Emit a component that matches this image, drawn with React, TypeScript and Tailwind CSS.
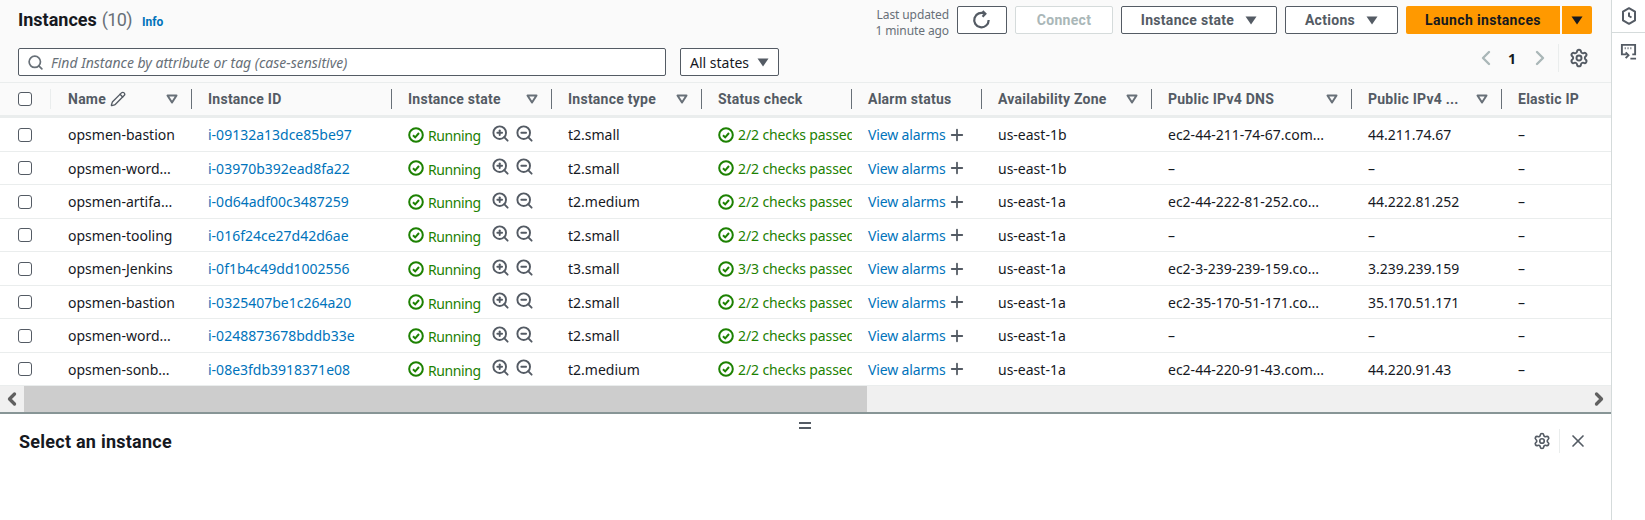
import { ChevronLeft, ChevronRight, Pencil, Plus, Search, Settings, X, ZoomIn, ZoomOut } from "lucide-react"

const font = "font-['Noto_Sans',sans-serif]"

const rows = [
    ["opsmen-bastion", "i-09132a13dce85be97", "t2.small", "2/2 checks passed", "us-east-1b", "ec2-44-211-74-67.com...", "44.211.74.67"],
    ["opsmen-word...", "i-03970b392ead8fa22", "t2.small", "2/2 checks passed", "us-east-1b", "–", "–"],
    ["opsmen-artifa...", "i-0d64adf00c3487259", "t2.medium", "2/2 checks passed", "us-east-1a", "ec2-44-222-81-252.co...", "44.222.81.252"],
    ["opsmen-tooling", "i-016f24ce27d42d6ae", "t2.small", "2/2 checks passed", "us-east-1a", "–", "–"],
    ["opsmen-Jenkins", "i-0f1b4c49dd1002556", "t3.small", "3/3 checks passed", "us-east-1a", "ec2-3-239-239-159.co...", "3.239.239.159"],
    ["opsmen-bastion", "i-0325407be1c264a20", "t2.small", "2/2 checks passed", "us-east-1a", "ec2-35-170-51-171.co...", "35.170.51.171"],
    ["opsmen-word...", "i-0248873678bddb33e", "t2.small", "2/2 checks passed", "us-east-1a", "–", "–"],
    ["opsmen-sonb...", "i-08e3fdb3918371e08", "t2.medium", "2/2 checks passed", "us-east-1a", "ec2-44-220-91-43.com...", "44.220.91.43"],
]

const headers = [
    { label: "Name", width: "w-[141px]", sort: true, pencil: true },
    { label: "Instance ID", width: "w-[200px]", sort: false },
    { label: "Instance state", width: "w-[160px]", sort: true },
    { label: "Instance type", width: "w-[150px]", sort: true },
    { label: "Status check", width: "w-[150px]", sort: false },
    { label: "Alarm status", width: "w-[130px]", sort: false },
    { label: "Availability Zone", width: "w-[170px]", sort: true },
    { label: "Public IPv4 DNS", width: "w-[200px]", sort: true },
    { label: "Public IPv4 ...", width: "w-[150px]", sort: true },
    { label: "Elastic IP", width: "w-[110px]", sort: false, last: true },
]

function Checkbox() {
    return <div className="w-[14px] h-[14px] rounded-[3px] border border-[#545b64] bg-white shrink-0" />
}

function SortIcon() {
    return (
        <svg width="12" height="10" viewBox="0 0 12 10" className="shrink-0">
            <path d="M1.5 1.5h9L6 8.5z" fill="none" stroke="#687078" strokeWidth="2" strokeLinejoin="round" />
        </svg>
    )
}

function Caret({ color = "#545b64" }: { color?: string }) {
    return (
        <svg width="12" height="9" viewBox="0 0 12 9" className="shrink-0">
            <path d="M0.5 0.5h11L6 8.5z" fill={color} />
        </svg>
    )
}

function CheckCircle() {
    return (
        <svg width="16" height="16" viewBox="0 0 16 16" className="shrink-0">
            <circle cx="8" cy="8" r="6.8" fill="none" stroke="#1d8102" strokeWidth="2" />
            <path d="M5 8.2l2.2 2.2L11 6" fill="none" stroke="#1d8102" strokeWidth="2" />
        </svg>
    )
}

function Row({ row }: { row: string[] }) {
    return (
        <div className="flex items-center h-[33.5px] pt-[1px] border-b border-[#eaeded] text-[14px] text-[#16191f] last:border-b-0">
            <div className="w-[51px] pl-[18px] shrink-0"><Checkbox /></div>
            <div className="w-[141px] pl-[17px] shrink-0 whitespace-nowrap">{row[0]}</div>
            <div className="w-[200px] pl-[16px] shrink-0 text-[#0073bb] whitespace-nowrap">{row[1]}</div>
            <div className="w-[160px] pl-[16px] shrink-0 flex items-center text-[#1d8102]">
                <CheckCircle />
                <span className="ml-[4px] mt-[2px] tracking-[-0.4px]">Running</span>
                <ZoomIn size={19} strokeWidth={2.4} color="#545b64" className="ml-[10px] -mt-[3px]" />
                <ZoomOut size={19} strokeWidth={2.4} color="#545b64" className="ml-[5px] -mt-[3px]" />
            </div>
            <div className="w-[150px] pl-[16px] shrink-0">{row[2]}</div>
            <div className="w-[150px] pl-[16px] shrink-0 flex items-center overflow-hidden whitespace-nowrap text-[#1d8102]">
                <CheckCircle />
                <span className="ml-[4px] tracking-[-0.12px]">{row[3]}</span>
            </div>
            <div className="w-[130px] pl-[16px] shrink-0 flex items-center text-[#0073bb] whitespace-nowrap tracking-[-0.15px]">
                View alarms
                <Plus size={18} strokeWidth={2.4} color="#545b64" className="ml-[2px]" />
            </div>
            <div className="w-[170px] pl-[16px] shrink-0">{row[4]}</div>
            <div className="w-[200px] pl-[16px] shrink-0 whitespace-nowrap">{row[5]}</div>
            <div className="w-[150px] pl-[16px] shrink-0">{row[6]}</div>
            <div className="w-[110px] pl-[16px] shrink-0">–</div>
        </div>
    )
}

function App() {
    return (
        <div className={`flex w-full h-[520px] overflow-hidden bg-white ${font}`}>
            <div className="w-[1611px] shrink-0 flex flex-col">
                <div className="h-[83px] bg-[#fafafa] border-b border-[#eaeded] px-[18px] flex flex-col">
                    <div className="flex items-start justify-between h-[48px]">
                        <div className="flex items-baseline mt-[6px] font-['Roboto',sans-serif]">
                            <span className="text-[18px] font-bold text-[#16191f]">Instances</span>
                            <span className="text-[18px] text-[#687078] ml-[5px] tracking-[-0.6px]">(10)</span>
                            <span className="text-[12px] font-bold text-[#0073bb] ml-[10px]">Info</span>
                        </div>
                        <div className="flex items-start gap-[8px] pt-[6px] mr-[1px]">
                            <div className="text-[12px] leading-[16px] text-[#687078] text-right pt-[1px] whitespace-nowrap tracking-[-0.1px]">
                                Last updated<br />1 minute ago
                            </div>
                            <button className="w-[50px] h-[28px] border border-[#545b64] rounded-[2px] bg-white flex items-center justify-center">
                                <svg width="20" height="20" viewBox="0 0 18 18" fill="none" stroke="#545b64" strokeWidth="2">
                                    <path d="M11.5 3.3A6.5 6.5 0 1 0 15 9" />
                                    <path d="M9.5 1l2.5 2.4-2.5 2.6" />
                                </svg>
                            </button>
                            <button className="w-[98px] h-[28px] border border-[#d5dbdb] rounded-[2px] bg-white text-[14px] font-bold text-[#aab7b8] font-['Roboto',sans-serif] tracking-[0.3px]">Connect</button>
                            <button className="w-[156px] h-[28px] border border-[#545b64] rounded-[2px] bg-white text-[14px] font-bold text-[#545b64] flex items-center justify-center gap-[11px] font-['Roboto',sans-serif] tracking-[0.3px]">Instance state <Caret /></button>
                            <button className="w-[113px] h-[28px] border border-[#545b64] rounded-[2px] bg-white text-[14px] font-bold text-[#545b64] flex items-center justify-center gap-[11px] font-['Roboto',sans-serif] tracking-[0.3px]">Actions <Caret /></button>
                            <div className="flex gap-[2px]">
                                <button className="w-[154px] h-[28px] bg-[#ff9900] rounded-l-[2px] text-[14px] font-bold text-[#16191f] font-['Roboto',sans-serif] tracking-[0.35px]">Launch instances</button>
                                <button className="w-[30px] h-[28px] bg-[#ff9900] rounded-r-[2px] flex items-center justify-center"><Caret color="#16191f" /></button>
                            </div>
                        </div>
                    </div>
                    <div className="flex items-start h-[28px]">
                        <div className="w-[648px] h-[28px] border border-[#545b64] rounded-[2px] bg-white flex items-center pl-[8px]">
                            <Search size={17} strokeWidth={2.4} color="#687078" />
                            <span className="ml-[7px] text-[14px] italic text-[#687078]">Find Instance by attribute or tag (case-sensitive)</span>
                        </div>
                        <div className="ml-[14px] w-[99px] h-[28px] border border-[#545b64] rounded-[2px] bg-white flex items-center justify-between px-[9px] text-[14px] text-[#16191f]">
                            All states <Caret />
                        </div>
                        <div className="ml-auto flex items-center h-[28px] -mt-[4px] mr-[4px]">
                            <ChevronLeft size={24} strokeWidth={2.4} color="#aab7b8" />
                            <span className="ml-[5px] w-[18px] text-center text-[14px] font-bold text-[#16191f]">1</span>
                            <ChevronRight size={24} strokeWidth={2.4} color="#aab7b8" className="ml-[7px]" />
                            <div className="w-px h-[28px] bg-[#eaeded] ml-[6px]" />
                            <Settings size={20} strokeWidth={2.3} color="#545b64" className="ml-[10px]" />
                        </div>
                    </div>
                </div>
                <div className="h-[32px] bg-[#fafafa] flex items-center text-[14px] font-bold text-[#545b64] whitespace-nowrap font-['Roboto',sans-serif] tracking-[0.25px]">
                    <div className="w-[51px] h-[20px] shrink-0 pl-[18px] flex items-center border-r border-[#eaeded]"><Checkbox /></div>
                    {headers.map((h) => (
                        <div key={h.label} className={`${h.width} shrink-0 h-[20px] pl-[16px] pr-[13px] flex items-center justify-between ${h.last ? "" : "border-r border-[#687078]"}`}>
                            <span className={`flex items-center gap-[4px] ${h.pencil ? "ml-[1px]" : ""}`}>
                                {h.label}
                                {h.pencil && <Pencil size={16} strokeWidth={2} color="#545b64" />}
                            </span>
                            {h.sort && <SortIcon />}
                        </div>
                    ))}
                </div>
                <div className="h-[3px] bg-[#eaeded]" />
                {rows.map((r, i) => <Row key={i} row={r} />)}
                <div className="h-[26px] bg-[#f0f0f0] flex items-center shrink-0">
                    <div className="w-[24px] flex justify-center">
                        <ChevronLeft size={20} strokeWidth={4} color="#606060" />
                    </div>
                    <div className="w-[843px] h-full bg-[#cdcdcd]" />
                    <div className="ml-auto w-[24px] flex justify-center">
                        <ChevronRight size={20} strokeWidth={4} color="#606060" />
                    </div>
                </div>
                <div className="h-[2px] bg-[#879596] shrink-0" />
                <div className="relative flex items-center justify-between h-[54px] pl-[19px] pr-[23px] shrink-0">
                    <div className="absolute left-[799px] top-[8px] w-[12px] flex flex-col gap-[3px]">
                        <div className="h-[2px] bg-[#545b64]" />
                        <div className="h-[2px] bg-[#545b64]" />
                    </div>
                    <span className="text-[18px] font-bold text-[#16191f] mt-[1px] font-['Roboto',sans-serif] tracking-[0.25px]">Select an instance</span>
                    <div className="flex items-center">
                        <Settings size={18} strokeWidth={2.2} color="#545b64" />
                        <div className="w-px h-[24px] bg-[#eaeded] ml-[8px]" />
                        <X size={20} strokeWidth={2} color="#545b64" className="ml-[8px]" />
                    </div>
                </div>
            </div>
            <div className="flex-1 border-l border-[#d5dbdb] flex flex-col">
                <div className="h-[33px] border-b border-[#d5dbdb] flex items-center justify-center">
                    <svg width="16" height="18" viewBox="0 0 16 18" fill="none" stroke="#545b64" strokeWidth="2">
                        <path d="M8 1.2l6 3.4v8.8l-6 3.4-6-3.4V4.6z" strokeLinejoin="round" />
                        <path d="M8 5.5V9l2.5 1.5" />
                    </svg>
                </div>
                <div className="flex justify-center pt-[10px]">
                    <svg width="17" height="17" viewBox="0 0 18 18" fill="none" stroke="#545b64" strokeWidth="2">
                        <path d="M7 12H2V2h14v10h-3" />
                        <path d="M5 5.5h1M8 5.5h1M11 5.5h1" />
                        <path d="M6 10l3 3-3 3M11 16.5h6" />
                    </svg>
                </div>
            </div>
        </div>
    )
}

export default App
